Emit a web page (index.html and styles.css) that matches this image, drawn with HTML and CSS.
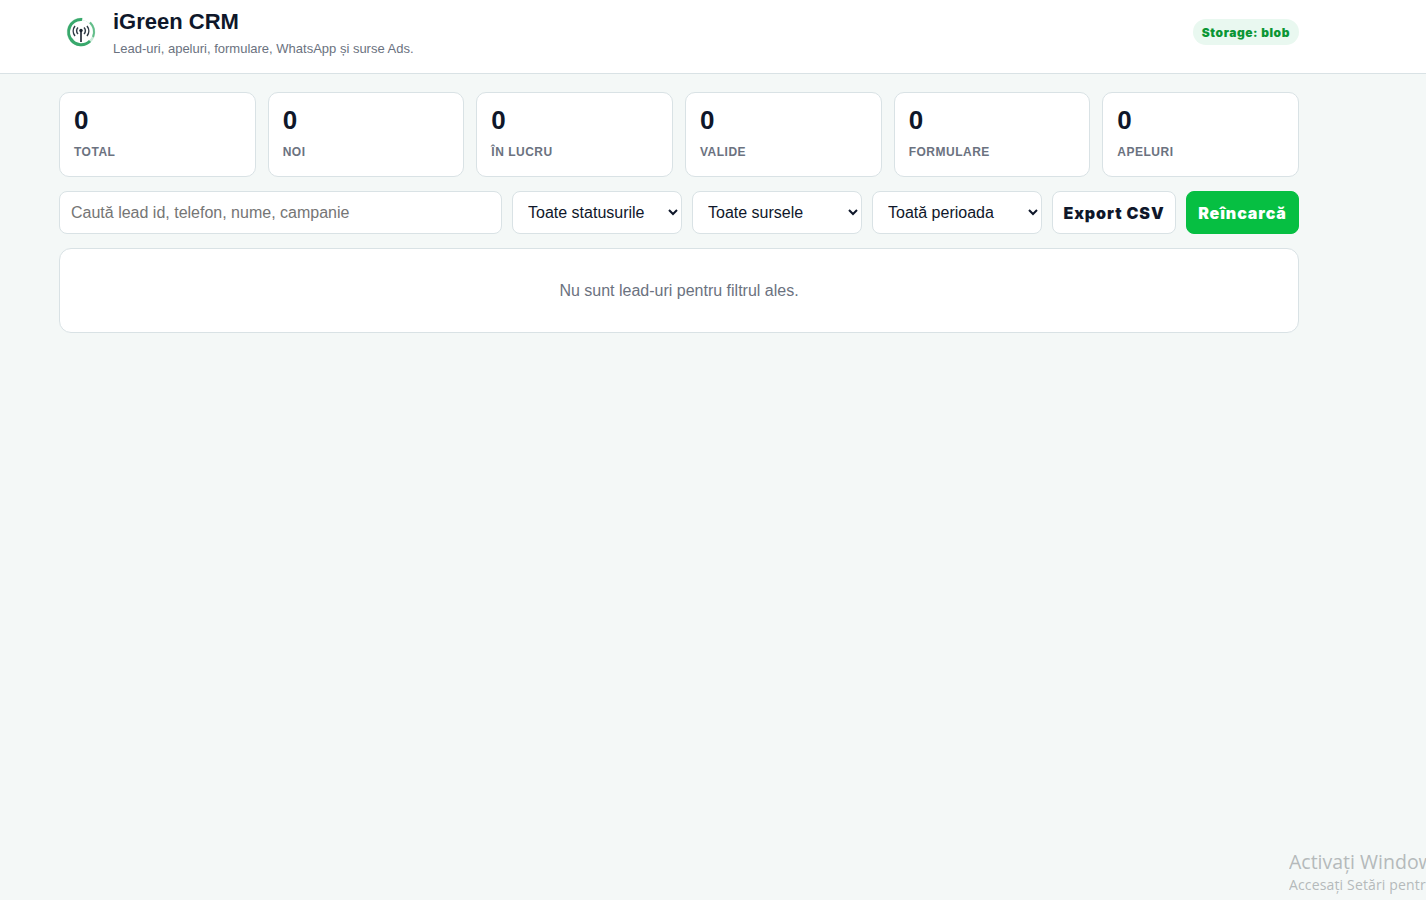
FILE: index.html
```
<!DOCTYPE html>
<html lang="ro">
<head>
  <meta charset="UTF-8">
  <meta name="viewport" content="width=device-width, initial-scale=1.0">
  <title>iGreen CRM</title>
  <link rel="stylesheet" href="styles.css">
</head>
<body>
  <header class="topbar">
    <div class="wrap topbar-inner">
      <div class="brand">
        <svg class="logo" viewBox="0 0 44 44" fill="none">
          <circle cx="22" cy="22" r="13" stroke="#c9ead7" stroke-width="2.5"/>
          <path d="M23 9.500A12.500 12.500 0 0 0 13.500 31" stroke="#38a86c" stroke-width="3"/>
          <path d="M31 12.500A13 13 0 0 1 34 27" stroke="#62bd89" stroke-width="2"/>
          <path d="M12 29.500A12.500 12.500 0 0 0 31 31" stroke="#38a86c" stroke-width="3"/>
          <path d="M24 8.500A13 13 0 0 1 31 12" stroke="#fff" stroke-width="3"/>
          <path d="M22 21v11" stroke="#1b2430" stroke-width="1.600"/>
          <circle cx="22" cy="20.500" r="1.700" fill="#1b2430"/>
          <path d="M19 17.500a4.500 4.500 0 0 0 0 6.500M25 17.500a4.500 4.500 0 0 1 0 6.500M16 16a8 8 0 0 0 0 10M28 16a8 8 0 0 1 0 10" stroke="#303b46" stroke-width="1.500"/>
        </svg>
        <div>
          <h1>iGreen CRM</h1>
          <p class="subtitle">Lead-uri, apeluri, formulare, WhatsApp și surse Ads.</p>
        </div>
      </div>
      <span class="storage">Storage: blob</span>
    </div>
  </header>

  <main class="wrap">
    <section class="stats">
      <div class="stat"><b>0</b><span>Total</span></div>
      <div class="stat"><b>0</b><span>Noi</span></div>
      <div class="stat"><b>0</b><span>În lucru</span></div>
      <div class="stat"><b>0</b><span>Valide</span></div>
      <div class="stat"><b>0</b><span>Formulare</span></div>
      <div class="stat"><b>0</b><span>Apeluri</span></div>
    </section>

    <section class="toolbar">
      <input type="search" placeholder="Caută lead id, telefon, nume, campanie">
      <select><option>Toate statusurile</option></select>
      <select><option>Toate sursele</option></select>
      <select><option>Toată perioada</option></select>
      <button>Export CSV</button>
      <button class="primary">Reîncarcă</button>
    </section>

    <div class="empty">Nu sunt lead-uri pentru filtrul ales.</div>
  </main>

  <div class="watermark">
    <div class="watermark-title">Activați Window</div>
    <div class="watermark-text">Accesați Setări pentr</div>
  </div>
</body>
</html>
```
FILE: styles.css
```
* {
  box-sizing: border-box;
}
body {
  margin: 0;
  height: 100vh;
  overflow: hidden;
  background: #f4f8f7;
  color: #0f172a;
  font-family: "Liberation Sans", Arial, sans-serif;
}
.wrap {
  width: 1240px;
  margin-left: 59px;
}
.topbar {
  height: 74px;
  background: #fff;
  border-bottom: 1px solid #d9e2e5;
}
.topbar-inner {
  display: flex;
  justify-content: space-between;
  align-items: center;
  height: 64px;
}
.brand {
  display: flex;
  align-items: center;
  gap: 10px;
}
.logo {
  width: 44px;
  height: 44px;
}
h1 {
  margin: 0;
  font-size: 22px;
  line-height: 25px;
}
.subtitle {
  margin: 7px 0 0;
  color: #6b7280;
  font-size: 13px;
  line-height: 15px;
}
.storage {
  padding: 6px 9px 4px;
  border-radius: 999px;
  background: #e9f8f0;
  color: #0b9635;
  font: 900 12px/16px Inter, sans-serif;
  letter-spacing: 0.58px;
}
.stats {
  display: grid;
  grid-template-columns: repeat(6, 1fr);
  gap: 12px;
  margin-top: 18px;
}
.stat {
  height: 85px;
  padding: 13px 14px;
  background: #fff;
  border: 1px solid #d9e2e5;
  border-radius: 10px;
}
.stat b {
  display: block;
  font-size: 26px;
  line-height: 29px;
}
.stat span {
  display: block;
  margin-top: 10px;
  color: #6b7280;
  font-size: 12px;
  font-weight: bold;
  line-height: 14px;
  letter-spacing: 0.5px;
  text-transform: uppercase;
}
.toolbar {
  display: grid;
  grid-template-columns: 1fr 170px 170px 170px 124px 113px;
  gap: 10px;
  margin-top: 14px;
}
input, select, button {
  height: 43px;
  padding: 0 11px;
  background: #fff;
  border: 1px solid #d9e2e5;
  border-radius: 8px;
  color: #0f172a;
  font: 16px "Liberation Sans", Arial, sans-serif;
}
select {
  padding-right: 0;
}
input::placeholder {
  color: #757575;
}
button {
  padding: 0;
  font: 900 16px Inter, sans-serif;
  letter-spacing: 0.9px;
  white-space: nowrap;
}
button.primary {
  background: #06bf42;
  border-color: #06bf42;
  color: #fff;
}
.empty {
  height: 85px;
  margin-top: 14px;
  background: #fff;
  border: 1px solid #d9e2e5;
  border-radius: 12px;
  color: #6b7280;
  line-height: 83px;
  text-align: center;
}
/* system notice, runs off the right edge */
.watermark {
  position: absolute;
  left: 1289px;
  right: 0;
  top: 849px;
  overflow: hidden;
  color: #b5babb;
  font-family: "Open Sans", sans-serif;
  white-space: nowrap;
}
.watermark-title {
  font-size: 19.5px;
  line-height: 26px;
}
.watermark-text {
  font-size: 14px;
  line-height: 20px;
  letter-spacing: 0.15px;
}
```
